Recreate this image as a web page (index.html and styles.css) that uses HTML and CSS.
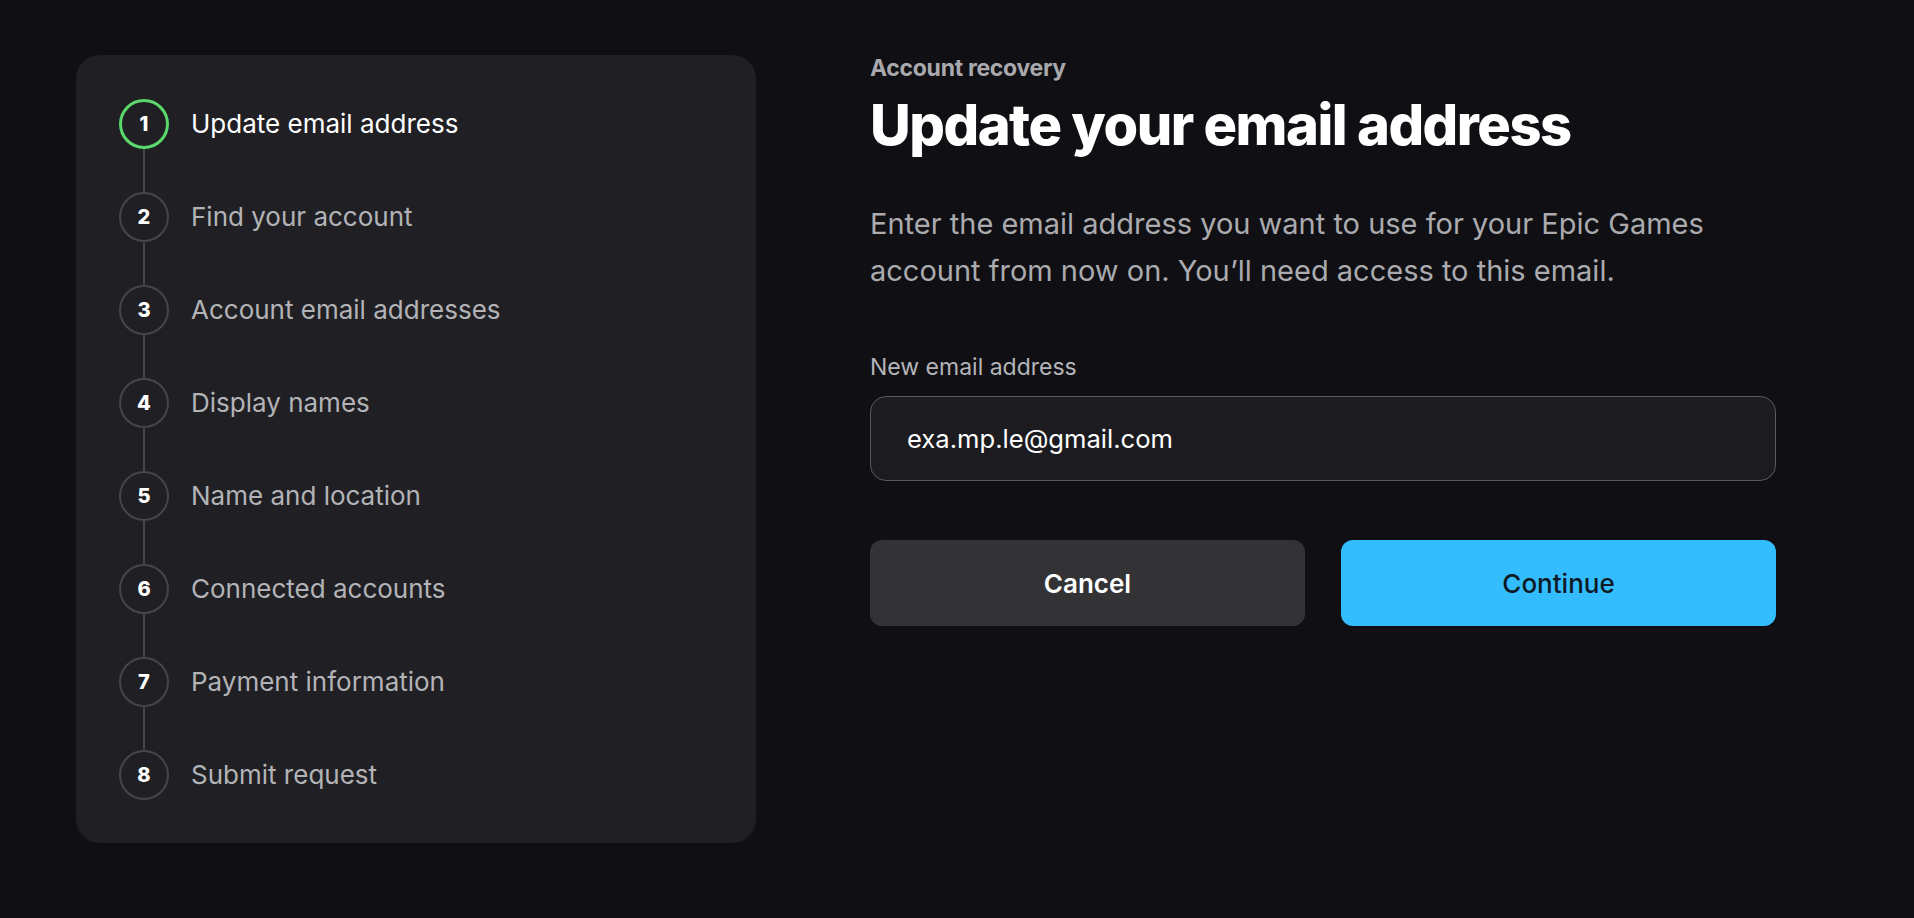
FILE: index.html
```html
<!DOCTYPE html>
<html lang="en">
<head>
<meta charset="utf-8">
<title>Update your email address</title>
<link rel="stylesheet" href="styles.css">
</head>
<body>
<main class="page">
  <aside class="steps-panel">
    <ol class="steps">
      <li class="step active"><span class="num">1</span><span class="label">Update email address</span></li>
      <li class="step"><span class="num">2</span><span class="label">Find your account</span></li>
      <li class="step"><span class="num">3</span><span class="label">Account email addresses</span></li>
      <li class="step"><span class="num">4</span><span class="label">Display names</span></li>
      <li class="step"><span class="num">5</span><span class="label">Name and location</span></li>
      <li class="step"><span class="num">6</span><span class="label">Connected accounts</span></li>
      <li class="step"><span class="num">7</span><span class="label">Payment information</span></li>
      <li class="step last"><span class="num">8</span><span class="label">Submit request</span></li>
    </ol>
  </aside>
  <section class="content">
    <div class="eyebrow">Account recovery</div>
    <h1 class="title">Update your email address</h1>
    <p class="desc">Enter the email address you want to use for your Epic Games account from now on. You’ll need access to this email.</p>
    <label class="field-label" for="email">New email address</label>
    <input class="field" id="email" type="text" value="exa.mp.le@gmail.com">
    <div class="actions">
      <button class="btn btn-cancel" type="button">Cancel</button>
      <button class="btn btn-continue" type="button">Continue</button>
    </div>
  </section>
</main>
</body>
</html>
```

FILE: styles.css
```css
* { box-sizing: border-box; }
html, body { margin: 0; padding: 0; }
body {
  background: #101014;
  font-family: Inter, "Noto Sans", "Liberation Sans", sans-serif;
  color: #fff;
  width: 1914px;
  height: 918px;
  overflow: hidden;
}
.page {
  display: flex;
  align-items: flex-start;
  gap: 114px;
  padding: 55px 0 0 76px;
}
.steps-panel {
  width: 680px;
  height: 788px;
  background: #202024;
  border-radius: 24px;
  padding: 44px 43px;
}
.steps {
  list-style: none;
  margin: 0;
  padding: 0;
  display: flex;
  flex-direction: column;
  gap: 43px;
}
.step {
  display: flex;
  align-items: center;
  gap: 22px;
  position: relative;
  height: 50px;
}
.step::after {
  content: "";
  position: absolute;
  left: 24px;
  top: 50px;
  width: 2px;
  height: 43px;
  background: #46464a;
}
.step.last::after { display: none; }
.num {
  width: 50px;
  height: 50px;
  flex: none;
  border-radius: 50%;
  border: 2px solid #46464a;
  display: flex;
  align-items: center;
  justify-content: center;
  font-size: 20px;
  font-weight: 800;
  color: #fff;
}
.step.active .num {
  border: 3px solid #5bd86c;
}
.label {
  font-size: 26px;
  color: #b3b3b7;
  line-height: 32px;
}
.step.active .label { color: #fff; }

.content {
  width: 906px;
  display: flex;
  flex-direction: column;
}
.eyebrow {
  font-size: 23px;
  font-weight: 700;
  line-height: 26px;
  color: #a9a9ad;
  letter-spacing: -0.3px;
}
.title {
  margin: 12px 0 0;
  font-size: 56px;
  line-height: 64px;
  font-weight: 800;
  letter-spacing: -1.5px;
  color: #fff;
}
.desc {
  margin: 44px 0 0;
  font-size: 29px;
  line-height: 46.7px;
  color: #ababaf;
  max-width: 906px;
}
.field-label {
  margin-top: 59px;
  font-size: 23px;
  line-height: 28px;
  color: #b5b5b9;
}
.field {
  margin-top: 15px;
  height: 85px;
  width: 906px;
  background: #1c1c20;
  border: 1px solid #5a5a5e;
  border-radius: 16px;
  padding: 0 36px;
  font-family: inherit;
  font-size: 25.6px;
  color: #fff;
  outline: none;
}
.actions {
  margin-top: 59px;
  display: flex;
  gap: 36px;
}
.btn {
  flex: 1;
  height: 86px;
  border: none;
  border-radius: 12px;
  font-family: inherit;
  font-size: 26px;
}
.btn-cancel {
  background: #333336;
  color: #fff;
  font-weight: 600;
}
.btn-continue {
  background: #33bdfe;
  color: #0f1a24;
  font-weight: 500;
}
```
